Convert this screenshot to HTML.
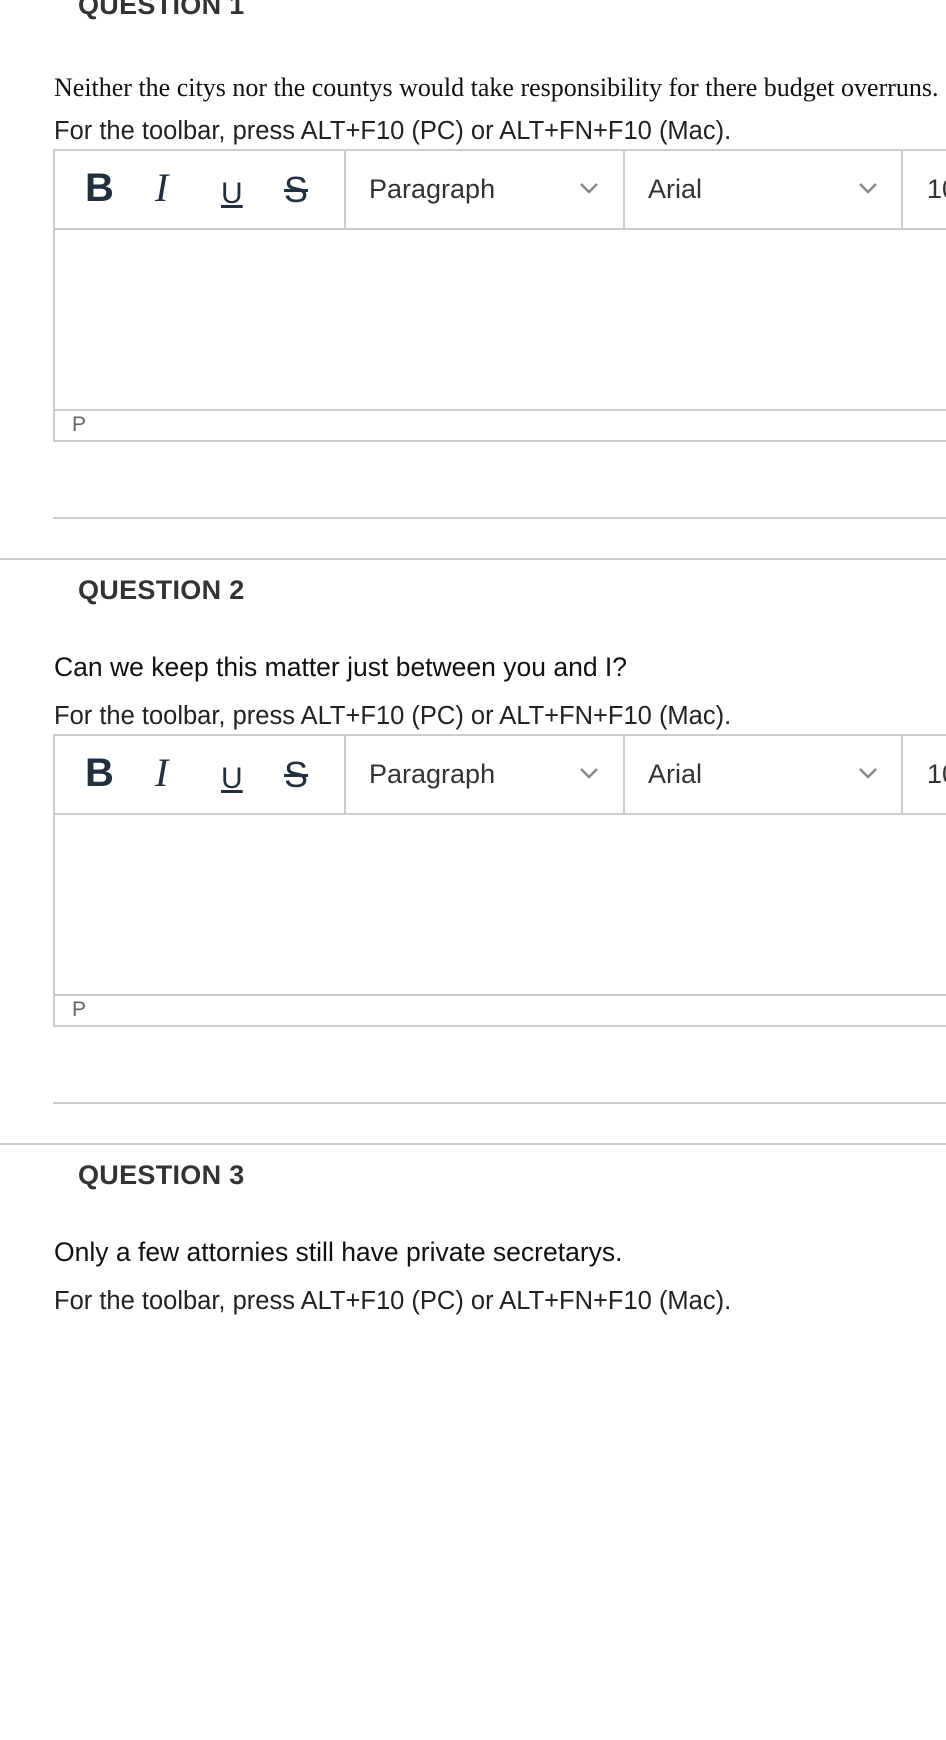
<!DOCTYPE html>
<html><head><meta charset="utf-8"><style>
body{margin:0;width:946px;height:1316px;overflow:hidden;background:#fff;position:relative;font-family:"Liberation Sans",sans-serif}
.b{position:absolute;left:0;width:946px;height:580px}
.h{position:absolute;left:78px;top:0;font-size:27px;font-weight:bold;color:#333;line-height:30px;letter-spacing:0.3px}
.q{position:absolute;left:54px;top:77px;font-size:26.5px;color:#111;line-height:30px;white-space:nowrap}
.qs{font-family:"Liberation Serif",serif;font-size:26px;top:83px}
.ins{position:absolute;left:54px;top:126px;font-size:25.5px;color:#222;line-height:30px;white-space:nowrap}
.ed{position:absolute;left:53px;top:159px;width:900px;height:293px;border:2px solid #ccc;box-sizing:border-box}
.tb{position:absolute;left:0;top:0;right:0;height:77px;border-bottom:2px solid #ccc}
.st{position:absolute;left:0;top:258px;right:0;height:2px;background:#ccc}
.pp{position:absolute;left:17px;top:262px;font-size:21px;color:#666}
.dv{position:absolute;top:0;width:2px;height:77px;background:#ccc}
.ic{position:absolute;top:14px;font-size:40px;color:#222f3e;line-height:46px}
.sel{position:absolute;top:22px;font-size:27px;color:#333;line-height:32px}
.chev{position:absolute;top:30px}
.l1{position:absolute;left:53px;top:527px;width:893px;height:2px;background:#ccc}
.l2{position:absolute;left:0;top:568px;width:946px;height:2px;background:#ccc}
</style></head><body>

<div class="b" style="top:-10px">
<div class="h">QUESTION 1</div>
<div class="q qs">Neither the citys nor the countys would take responsibility for there budget overruns.</div>
<div class="ins">For the toolbar, press ALT+F10 (PC) or ALT+FN+F10 (Mac).</div>
<div class="ed"><div class="tb">
<div class="ic" style="left:30px;font-weight:bold">B</div>
<div class="ic" style="left:100px;font-family:'Liberation Serif',serif;font-style:italic">I</div>
<div class="ic" style="left:166px;font-size:30px;text-decoration:underline;top:20px">U</div>
<div class="ic" style="left:229px;font-size:36px;text-decoration:line-through;top:16px">S</div>
<div class="dv" style="left:289px"></div>
<div class="sel" style="left:314px">Paragraph</div>
<svg class="chev" style="left:524px" width="20" height="14"><path d="M2 3 L10 11 L18 3" stroke="#888" stroke-width="2.5" fill="none"/></svg>
<div class="dv" style="left:568px"></div>
<div class="sel" style="left:593px">Arial</div>
<svg class="chev" style="left:803px" width="20" height="14"><path d="M2 3 L10 11 L18 3" stroke="#888" stroke-width="2.5" fill="none"/></svg>
<div class="dv" style="left:846px"></div>
<div class="sel" style="left:872px">10</div>
</div><div class="st"></div><div class="pp">P</div></div>
<div class="l1"></div><div class="l2"></div>
</div>

<div class="b" style="top:575px">
<div class="h">QUESTION 2</div>
<div class="q">Can we keep this matter just between you and I?</div>
<div class="ins">For the toolbar, press ALT+F10 (PC) or ALT+FN+F10 (Mac).</div>
<div class="ed"><div class="tb">
<div class="ic" style="left:30px;font-weight:bold">B</div>
<div class="ic" style="left:100px;font-family:'Liberation Serif',serif;font-style:italic">I</div>
<div class="ic" style="left:166px;font-size:30px;text-decoration:underline;top:20px">U</div>
<div class="ic" style="left:229px;font-size:36px;text-decoration:line-through;top:16px">S</div>
<div class="dv" style="left:289px"></div>
<div class="sel" style="left:314px">Paragraph</div>
<svg class="chev" style="left:524px" width="20" height="14"><path d="M2 3 L10 11 L18 3" stroke="#888" stroke-width="2.5" fill="none"/></svg>
<div class="dv" style="left:568px"></div>
<div class="sel" style="left:593px">Arial</div>
<svg class="chev" style="left:803px" width="20" height="14"><path d="M2 3 L10 11 L18 3" stroke="#888" stroke-width="2.5" fill="none"/></svg>
<div class="dv" style="left:846px"></div>
<div class="sel" style="left:872px">10</div>
</div><div class="st"></div><div class="pp">P</div></div>
<div class="l1"></div><div class="l2"></div>
</div>

<div class="b" style="top:1160px">
<div class="h">QUESTION 3</div>
<div class="q">Only a few attornies still have private secretarys.</div>
<div class="ins">For the toolbar, press ALT+F10 (PC) or ALT+FN+F10 (Mac).</div>
</div>

</body></html>
